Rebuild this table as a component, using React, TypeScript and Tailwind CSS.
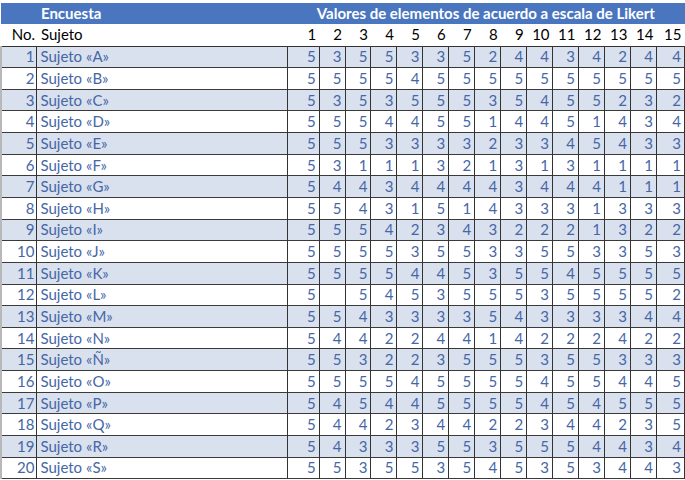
const data: (number | null)[][] = [
  [5, 3, 5, 5, 3, 3, 5, 2, 4, 4, 3, 4, 2, 4, 4],
  [5, 5, 5, 5, 4, 5, 5, 5, 5, 5, 5, 5, 5, 5, 5],
  [5, 3, 5, 3, 5, 5, 5, 3, 5, 4, 5, 5, 2, 3, 2],
  [5, 5, 5, 4, 4, 5, 5, 1, 4, 4, 5, 1, 4, 3, 4],
  [5, 5, 5, 3, 3, 3, 3, 2, 3, 3, 4, 5, 4, 3, 3],
  [5, 3, 1, 1, 1, 3, 2, 1, 3, 1, 3, 1, 1, 1, 1],
  [5, 4, 4, 3, 4, 4, 4, 4, 3, 4, 4, 4, 1, 1, 1],
  [5, 5, 4, 3, 1, 5, 1, 4, 3, 3, 3, 1, 3, 3, 3],
  [5, 5, 5, 4, 2, 3, 4, 3, 2, 2, 2, 1, 3, 2, 2],
  [5, 5, 5, 5, 3, 5, 5, 3, 3, 5, 5, 3, 3, 5, 3],
  [5, 5, 5, 5, 4, 4, 5, 3, 5, 5, 4, 5, 5, 5, 5],
  [5, null, 5, 4, 5, 3, 5, 5, 5, 3, 5, 5, 5, 5, 2],
  [5, 5, 4, 3, 3, 3, 3, 5, 4, 3, 3, 3, 3, 4, 4],
  [5, 4, 4, 2, 2, 4, 4, 1, 4, 2, 2, 2, 4, 2, 2],
  [5, 5, 3, 2, 2, 3, 5, 5, 5, 3, 5, 5, 3, 3, 3],
  [5, 5, 5, 5, 4, 5, 5, 5, 5, 4, 5, 5, 4, 4, 5],
  [5, 4, 5, 4, 4, 5, 5, 5, 5, 4, 5, 4, 5, 5, 5],
  [5, 4, 4, 2, 3, 4, 4, 2, 2, 3, 4, 4, 2, 3, 5],
  [5, 4, 3, 3, 3, 5, 5, 3, 5, 5, 5, 4, 4, 3, 4],
  [5, 5, 3, 5, 5, 3, 5, 4, 5, 3, 5, 3, 4, 4, 3],
];

const letters = ["A", "B", "C", "D", "E", "F", "G", "H", "I", "J", "K", "L", "M", "N", "Ñ", "O", "P", "Q", "R", "S"];

const colWidths = [32, 26, 26, 26, 26, 26, 26, 26, 26, 26, 26, 26, 26, 26, 28];

export default function App() {
  return (
    <div className="h-[480px] w-[685px] overflow-hidden bg-white pt-[3px] font-['Lato',sans-serif] text-[15px] leading-none">
      <table className="table-fixed border-collapse">
        <colgroup>
          <col className="w-[36px]" />
          <col className="w-[251px]" />
          {colWidths.map((w, i) => (
            <col key={i} style={{ width: w }} />
          ))}
        </colgroup>
        <thead>
          <tr className="h-[21px] bg-[#4a76c0] font-bold text-white">
            <th />
            <th className="pl-[4px] text-left">Encuesta</th>
            <th colSpan={15} className="text-center">
              Valores de elementos de acuerdo a escala de Likert
            </th>
          </tr>
          <tr className="h-[22px] border-b border-[#333] text-black">
            <th className="pr-[2px] text-right font-normal">No.</th>
            <th className="pl-[4px] text-left font-normal">Sujeto</th>
            {colWidths.map((_, i) => (
              <th key={i} className="pr-[3px] text-right font-normal">
                {i + 1}
              </th>
            ))}
          </tr>
        </thead>
        <tbody className="text-[#4667a6]">
          {data.map((row, i) => (
            <tr
              key={i}
              className={`h-[21.65px] border-b border-[#3a3a3a] ${i % 2 === 0 ? "bg-[#d9e0ee]" : "bg-white"}`}
            >
              <td className="border-r border-l-2 border-r-[#333] border-l-[#b8b8b8] pr-[2px] text-right">
                {i + 1}
              </td>
              <td className="border-r border-[#333] pl-[3px] text-left">
                Sujeto «{letters[i]}»
              </td>
              {row.map((v, j) => (
                <td key={j} className="border-r border-[#333] pr-[3px] text-right">
                  {v ?? ""}
                </td>
              ))}
            </tr>
          ))}
        </tbody>
      </table>
    </div>
  );
}
